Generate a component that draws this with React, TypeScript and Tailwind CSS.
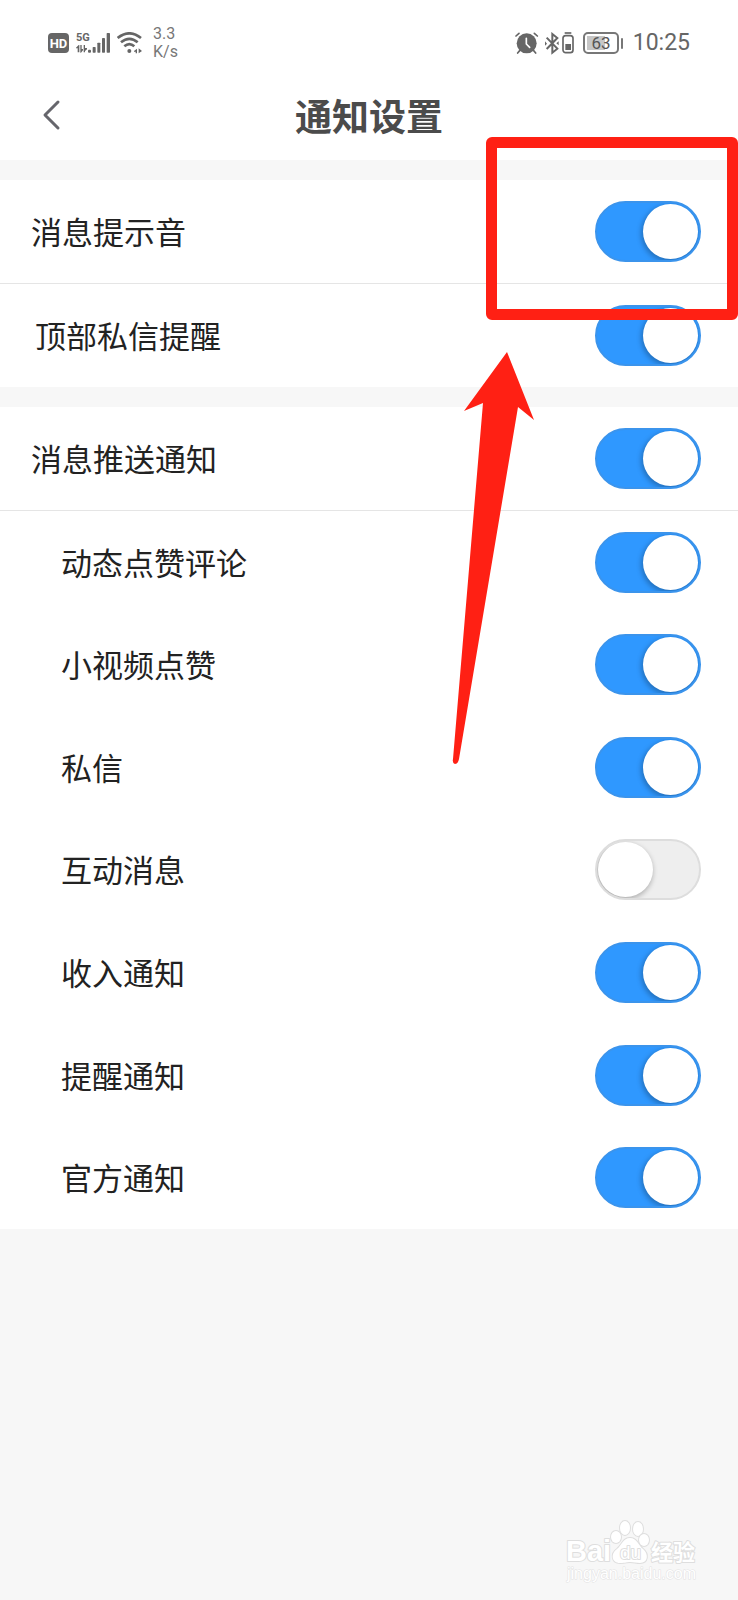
import React, { useState } from 'react';

type Item = { id: string; label: string; on: boolean; indent: string };

const GROUPS: { top: Item[]; push: Item; details: Item[] } = {
  top: [
    { id: 'sound', label: '消息提示音', on: true, indent: 'pl-[31px]' },
    { id: 'banner', label: '顶部私信提醒', on: true, indent: 'pl-[35px]' },
  ],
  push: { id: 'push', label: '消息推送通知', on: true, indent: 'pl-[31px]' },
  details: [
    { id: 'comment', label: '动态点赞评论', on: true, indent: 'pl-[61px]' },
    { id: 'video', label: '小视频点赞', on: true, indent: 'pl-[61px]' },
    { id: 'private', label: '私信', on: true, indent: 'pl-[61px]' },
    { id: 'interact', label: '互动消息', on: false, indent: 'pl-[61px]' },
    { id: 'income', label: '收入通知', on: true, indent: 'pl-[61px]' },
    { id: 'remind', label: '提醒通知', on: true, indent: 'pl-[61px]' },
    { id: 'official', label: '官方通知', on: true, indent: 'pl-[61px]' },
  ],
};

function StatusBar() {
  return (
    <div className="flex items-center justify-between h-[84px] px-12 pt-0.5 text-[#666] font-[Roboto,sans-serif]">
      <div className="flex items-center">
        {/* HD */}
        <svg width="21" height="20" viewBox="0 0 21 20" className="mr-[7px]">
          <rect width="21" height="20" rx="4" fill="#666" />
          <text x="10.5" y="15" textAnchor="middle" fontSize="13" fontWeight="700" fill="#fff" fontFamily="Roboto">HD</text>
        </svg>
        {/* 5G signal */}
        <svg width="34" height="26" viewBox="0 -6 102 78" fill="#666" className="mr-[7px]">
          <text x="0" y="27" fontSize="33" fontWeight="700" fontFamily="'Liberation Sans Narrow', Roboto, sans-serif">5G</text>
          <path d="M0 47 L8 39 H10 V61 H5 V49 H0Z M13 39 H17 V51 H21 V55 L15 62 H13Z M23 39 H27 V48 H33 V52 L27 57 V61 H23Z" />
          <rect x="36" y="53" width="9" height="9" rx="3" />
          <rect x="50" y="45" width="9" height="17" rx="2" />
          <rect x="64" y="32" width="9" height="30" rx="2" />
          <rect x="78" y="18" width="9" height="44" rx="2" />
          <rect x="92" y="3" width="10" height="59" rx="2" />
        </svg>
        {/* Wi-Fi */}
        <svg width="26" height="22" viewBox="0 0 78 66" fill="none" stroke="#666" strokeWidth="8" className="mr-[10px]">
          <path d="M2 18 Q37 -10 72 18" />
          <path d="M12 31 Q37 10 62 31" />
          <path d="M22 43 Q37 30 52 43" />
          <circle cx="37" cy="57" r="6" fill="#666" stroke="none" />
          <path d="M51 57 L60 50 V64 H56 V59 H51Z M65 49 L75 57 L65 64Z" fill="#666" stroke="none" />
        </svg>
        <p className="text-[16px] leading-[18px] text-[#777]">
          3.3
          <br />
          K/s
        </p>
      </div>
      <div className="flex items-center">
        {/* Alarm */}
        <svg width="24" height="22" viewBox="0 0 72 66" fill="none" stroke="#666" strokeWidth="5" strokeLinecap="round" className="mr-[6px]">
          <circle cx="35" cy="34" r="30" fill="#666" stroke="none" />
          <path d="M3 12 L12 4 M58 4 L67 12 M14 56 L8 63 M56 56 L62 63" />
          <path d="M34 19 V36 L44 46" stroke="#fff" />
        </svg>
        {/* Bluetooth */}
        <svg width="14" height="23" viewBox="0 0 42 69" fill="none" stroke="#666" strokeWidth="6" className="mr-[3px]">
          <path d="M5 17 L37 50 L22 62 V6 L37 18 L5 51" />
          <path d="M0 28 L6 35 L0 41Z M34 34 L41 28 V40Z" fill="#666" stroke="none" />
        </svg>
        <svg width="12" height="22" viewBox="0 0 36 66" fill="none" stroke="#666" strokeWidth="5" className="mr-[9px]">
          <path d="M8 3 H28" />
          <rect x="3" y="11" width="30" height="51" rx="8" />
          <rect x="10" y="36" width="17" height="18" fill="#666" stroke="none" />
        </svg>
        {/* Battery */}
        <svg width="41" height="22" viewBox="0 0 41 22" fill="none" className="mr-[9px]">
          <rect x="4" y="4" width="18" height="14" fill="#c6c6c6" />
          <rect x="1" y="1" width="34" height="20" rx="4" stroke="#777" strokeWidth="2" />
          <rect x="38" y="6" width="2" height="11" rx="1" fill="#777" />
          <text x="18" y="17" textAnchor="middle" fontSize="17" fill="#555" fontFamily="Roboto">63</text>
        </svg>
        <span className="text-[23px] leading-[24px]">10:25</span>
      </div>
    </div>
  );
}

function SettingRow({ item, className = '' }: { item: Item; className?: string }) {
  const [on, setOn] = useState(item.on);
  return (
    <label htmlFor={item.id} className={`flex items-center justify-between bg-white pr-[37px] ${item.indent} ${className}`}>
      <span className="pb-px text-[31px] leading-[40px] text-[#222]">{item.label}</span>
      <input
        id={item.id}
        type="checkbox"
        checked={on}
        onChange={() => setOn(!on)}
        className="appearance-none relative shrink-0 w-[106px] h-[61px] rounded-full overflow-hidden bg-[#eee] border-2 border-[#ddd] checked:bg-[#2f98ff] checked:border-[#3b94ec] before:absolute before:left-px before:top-px before:size-[55px] before:rounded-full before:bg-white before:shadow-[-1px_2px_5px_1px_rgba(0,0,0,0.25)] checked:before:left-[46px]"
      />
    </label>
  );
}

function Watermark() {
  return (
    <svg width="140" height="68" viewBox="0 0 140 68" className="absolute right-[34px] bottom-3 pointer-events-none" fill="#fff" stroke="#dedede" strokeWidth="2" paintOrder="stroke" strokeLinejoin="round">
      <g fontFamily="'Liberation Sans', sans-serif" fontWeight="700">
        <text x="2" y="41" fontSize="29">Bai</text>
        <text x="87" y="40" fontSize="22" fontFamily="'Noto Sans CJK SC', sans-serif">经验</text>
      </g>
      <ellipse cx="52" cy="17" rx="5" ry="6" />
      <ellipse cx="61" cy="8" rx="5" ry="7" />
      <ellipse cx="74" cy="9" rx="5" ry="7" />
      <ellipse cx="80" cy="20" rx="5" ry="6" />
      <path d="M66 18 C59 18 58 25 53 29 C46 34 48 43 56 43 C62 43 63 42 66 42 C70 42 72 43 76 43 C84 43 85 34 79 29 C74 25 73 18 66 18Z" />
      <text x="56" y="39" fontSize="19" fontFamily="'Liberation Sans', sans-serif">du</text>
      <text x="3" y="59" fontSize="16" strokeWidth="1" stroke="#e2e2e2" fontFamily="'Liberation Sans', sans-serif">jingyan.baidu.com</text>
    </svg>
  );
}

export default function App() {
  return (
    <div className="relative min-h-screen bg-[#f7f7f7] font-['Noto_Sans_CJK_SC',sans-serif]">
      <header className="bg-white">
        <StatusBar />
        <div className="grid grid-cols-[1fr_auto_1fr] items-center h-[76px] px-[41px] pb-3.5">
          <button type="button" aria-label="返回" className="justify-self-start">
            <svg width="20" height="32" viewBox="0 0 20 32" fill="none" stroke="#66666c" strokeWidth="3" strokeLinecap="round" strokeLinejoin="round">
              <path d="M17 3 L4 16 L17 29" />
            </svg>
          </button>
          <h1 className="text-[37px] leading-[48px] font-bold text-[#4b4b4b]">通知设置</h1>
        </div>
      </header>

      <main>
        <section className="mt-5">
          <SettingRow item={GROUPS.top[0]} className="h-[104px] border-b border-[#e5e5e5]" />
          <SettingRow item={GROUPS.top[1]} className="h-[103px]" />
        </section>

        <section className="mt-5">
          <SettingRow item={GROUPS.push} className="h-[104px] border-b border-[#e5e5e5]" />
          <div className="grid auto-rows-fr min-h-[718px]">
            {GROUPS.details.map((item) => (
              <SettingRow key={item.id} item={item} />
            ))}
          </div>
        </section>
      </main>

      {/* Highlight box and arrow */}
      <div className="absolute right-0 top-[137px] w-[252px] h-[183px] border-[11px] border-[#ff2014] rounded-md pointer-events-none" />
      <svg width="84" height="414" viewBox="0 0 84 414" className="absolute right-[202px] top-[351px] pointer-events-none">
        <path d="M55 1 L82 69 L66 56 L7 408 Q6 413 3 413 Q0 412 1 408 L31 52 L12 60Z" fill="#ff2014" />
      </svg>

      <Watermark />
    </div>
  );
}
